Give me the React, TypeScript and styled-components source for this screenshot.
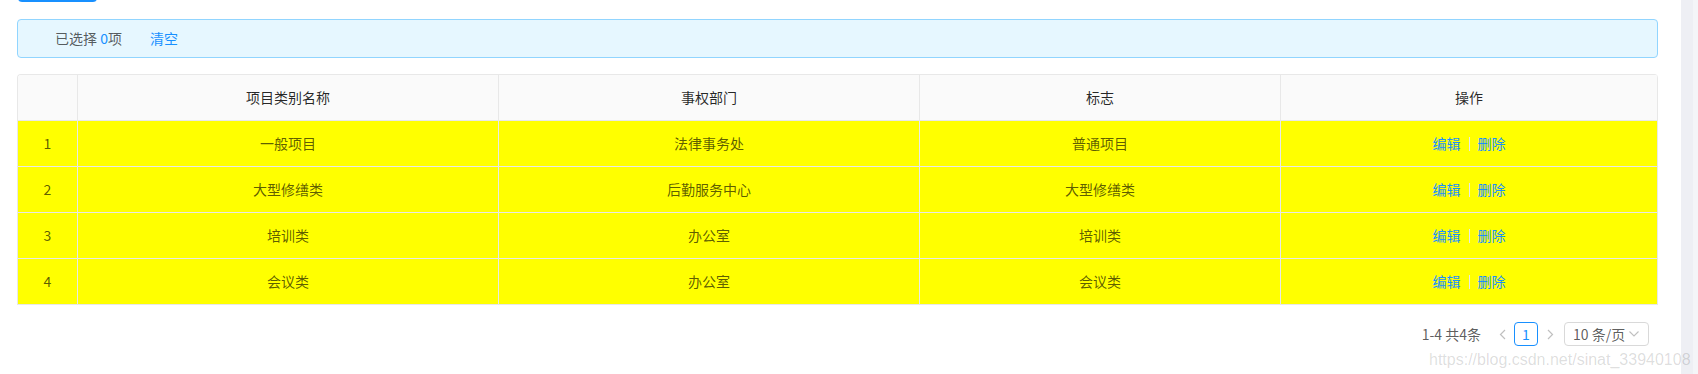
import styled, { createGlobalStyle } from "styled-components";

const GlobalStyle = createGlobalStyle`
  html, body {
    margin: 0;
    padding: 0;
    background: #fff;
  }
  body {
    font-family: "Noto Sans CJK SC", "Liberation Sans", sans-serif;
    font-size: 14px;
    line-height: 1.5;
    color: rgba(0, 0, 0, 0.65);
  }
`;

interface Project {
  key: number;
  name: string;
  dept: string;
  tag: string;
}

const projects: Project[] = [
  { key: 1, name: "一般项目", dept: "法律事务处", tag: "普通项目" },
  { key: 2, name: "大型修缮类", dept: "后勤服务中心", tag: "大型修缮类" },
  { key: 3, name: "培训类", dept: "办公室", tag: "培训类" },
  { key: 4, name: "会议类", dept: "办公室", tag: "会议类" },
];

const headers = ["", "项目类别名称", "事权部门", "标志", "操作"];

const ChevronLeft = () => (
  <svg width="7" height="11" viewBox="0 0 7 11" fill="none">
    <path d="M6 1 L1.5 5.5 L6 10" stroke="currentColor" strokeWidth="1.2" />
  </svg>
);

const ChevronRight = () => (
  <svg width="7" height="11" viewBox="0 0 7 11" fill="none">
    <path d="M1 1 L5.5 5.5 L1 10" stroke="currentColor" strokeWidth="1.2" />
  </svg>
);

const ChevronDown = () => (
  <svg width="10" height="6" viewBox="0 0 10 6" fill="none">
    <path d="M0.5 0.5 L5 5 L9.5 0.5" stroke="currentColor" strokeWidth="1.1" />
  </svg>
);

export default function App() {
  return (
    <>
      <GlobalStyle />
      <StyledPage>
        <StyledMain>
          <StyledToolbar>
            <StyledPrimaryButton />
          </StyledToolbar>

          <StyledAlert>
            已选择 <StyledCount>0</StyledCount>项
            <StyledClear>清空</StyledClear>
          </StyledAlert>

          <StyledTable>
            <StyledRow>
              {headers.map((h, i) => (
                <StyledHeadCell key={i}>{h}</StyledHeadCell>
              ))}
            </StyledRow>
            {projects.map((p) => (
              <StyledRow key={p.key}>
                <StyledCell>{p.key}</StyledCell>
                <StyledCell>{p.name}</StyledCell>
                <StyledCell>{p.dept}</StyledCell>
                <StyledCell>{p.tag}</StyledCell>
                <StyledCell>
                  <StyledLink>编辑</StyledLink>
                  <StyledDivider />
                  <StyledLink>删除</StyledLink>
                </StyledCell>
              </StyledRow>
            ))}
          </StyledTable>

          <StyledPager>
            <StyledTotal>1-4 共4条</StyledTotal>
            <StyledArrow>
              <ChevronLeft />
            </StyledArrow>
            <StyledPageItem $active>1</StyledPageItem>
            <StyledArrow>
              <ChevronRight />
            </StyledArrow>
            <StyledSizeSelect>
              <span>10 条/页</span>
              <StyledSelectArrow>
                <ChevronDown />
              </StyledSelectArrow>
            </StyledSizeSelect>
          </StyledPager>
        </StyledMain>

        <StyledScrollTrack />
        <StyledWatermark>https://blog.csdn.net/sinat_33940108</StyledWatermark>
      </StyledPage>
    </>
  );
}

const StyledPage = styled.div`
  position: relative;
  display: flex;
  width: 100%;
  min-height: 100vh;
`;

const StyledMain = styled.div`
  flex: 1;
  padding: 0 23px 0 17px;
`;

const StyledToolbar = styled.div`
  height: 2px;
  overflow: hidden;
  display: flex;
  align-items: flex-end;
  padding-left: 1px;
`;

const StyledPrimaryButton = styled.div`
  flex: none;
  width: 79px;
  height: 32px;
  border-radius: 4px;
  background: #1890ff;
`;

const StyledAlert = styled.div`
  margin-top: 17px;
  height: 39px;
  box-sizing: border-box;
  display: flex;
  align-items: center;
  padding: 8px 15px 8px 37px;
  border: 1px solid #91d5ff;
  border-radius: 4px;
  background: #e6f7ff;
  color: rgba(0, 0, 0, 0.65);
  white-space: pre;
`;

const StyledCount = styled.span`
  color: #1890ff;
`;

const StyledClear = styled.a`
  margin-left: 28px;
  color: #1890ff;
  cursor: pointer;
`;

const StyledTable = styled.div`
  margin-top: 16px;
  border-top: 1px solid #e8e8e8;
  border-left: 1px solid #e8e8e8;
  border-radius: 4px 4px 0 0;
  overflow: hidden;
`;

const StyledRow = styled.div`
  display: grid;
  grid-template-columns: 60px 421px 421px 361px 1fr;
`;

const StyledCell = styled.div`
  height: 46px;
  box-sizing: border-box;
  display: flex;
  align-items: center;
  justify-content: center;
  border-right: 1px solid #e8e8e8;
  border-bottom: 1px solid #e8e8e8;
  background: #ffff00;
  color: rgba(0, 0, 0, 0.65);
`;

const StyledHeadCell = styled(StyledCell)`
  background: #fafafa;
  color: rgba(0, 0, 0, 0.85);
`;

const StyledLink = styled.a`
  color: #1890ff;
  cursor: pointer;
`;

const StyledDivider = styled.span`
  display: inline-block;
  width: 1px;
  height: 14px;
  margin: 0 8px;
  background: #e8e8e8;
`;

const StyledPager = styled.div`
  margin-top: 17px;
  display: flex;
  align-items: center;
  justify-content: flex-end;
  padding-right: 9px;
  height: 24px;
`;

const StyledTotal = styled.span`
  margin-right: 9px;
  line-height: 24px;
`;

const StyledArrow = styled.span`
  width: 24px;
  height: 24px;
  display: flex;
  align-items: center;
  justify-content: center;
  color: rgba(0, 0, 0, 0.25);
`;

const StyledPageItem = styled.span<{ $active?: boolean }>`
  width: 24px;
  height: 24px;
  box-sizing: border-box;
  display: flex;
  align-items: center;
  justify-content: center;
  border: 1px solid ${(p) => (p.$active ? "#1890ff" : "transparent")};
  border-radius: 4px;
  color: ${(p) => (p.$active ? "#1890ff" : "rgba(0, 0, 0, 0.65)")};
  background: #fff;
`;

const StyledSizeSelect = styled.div`
  margin-left: 2px;
  width: 85px;
  height: 24px;
  box-sizing: border-box;
  display: flex;
  align-items: center;
  justify-content: space-between;
  padding: 0 9px 0 8px;
  border: 1px solid #d9d9d9;
  border-radius: 4px;
  color: rgba(0, 0, 0, 0.65);
`;

const StyledSelectArrow = styled.span`
  display: flex;
  color: rgba(0, 0, 0, 0.25);
`;

const StyledScrollTrack = styled.div`
  flex: none;
  width: 17px;
  background: linear-gradient(to right, #eeeff4 0, #eeeff4 12px, #f4f5f8 12px);
`;

const StyledWatermark = styled.div`
  position: absolute;
  left: 1429px;
  top: 351px;
  font-family: "Liberation Sans", Arial, sans-serif;
  font-size: 16px;
  line-height: 18px;
  color: rgba(0, 0, 0, 0.14);
  white-space: nowrap;
  pointer-events: none;
`;
